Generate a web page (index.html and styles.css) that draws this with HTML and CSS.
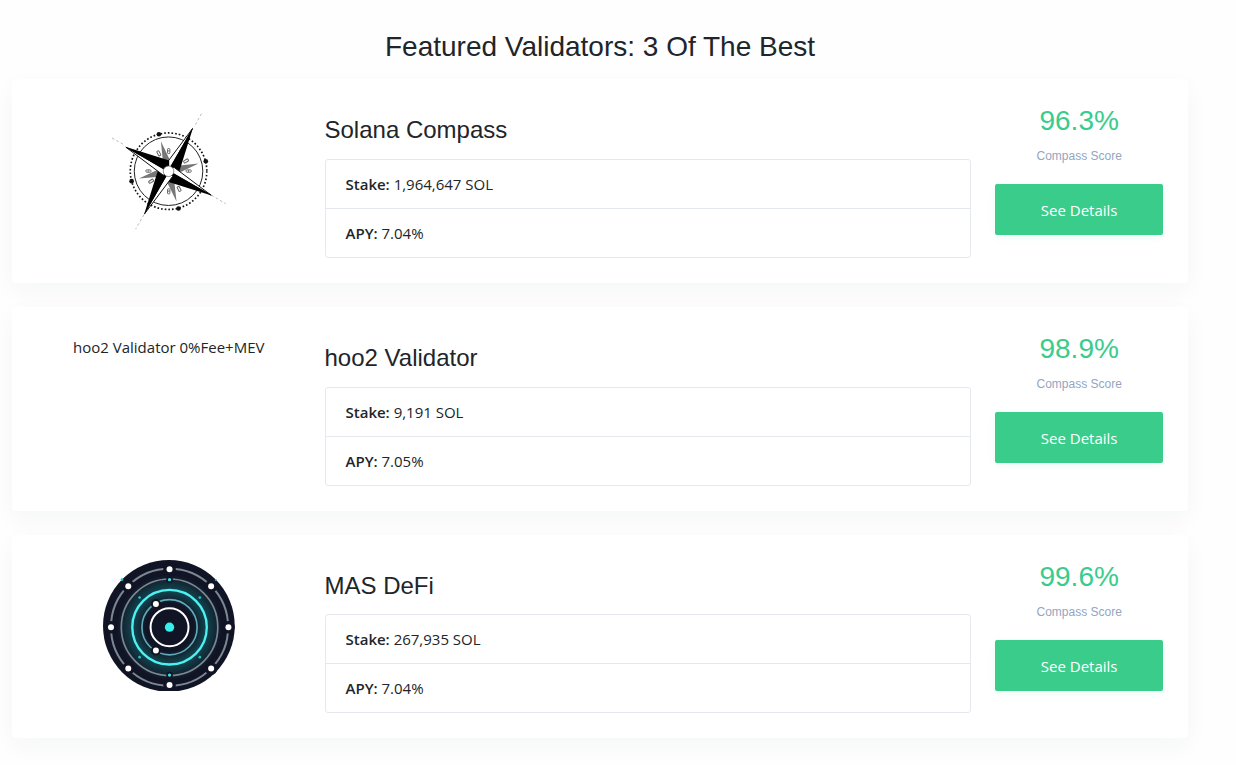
FILE: index.html
```html
<!DOCTYPE html>
<html lang="en">
<head>
  <meta charset="UTF-8" />
  <meta name="viewport" content="width=device-width, initial-scale=1.0"/>
  <title>Featured Validators</title>
  <link rel="stylesheet" href="styles.css">
</head>
<body>

  <main class="container">
    <h2 class="page-title">Featured Validators: 3 Of The Best</h2>

    <!-- Solana Compass -->
    <section class="card">
      <div class="logo">
        <svg class="logo-img" viewBox="9 -2 396 396" role="img" aria-label="Solana Compass">
          <defs>
            <g id="arm">
              <path d="M278 72L194 184L206 200Z" fill="#fff" stroke="#111" stroke-width="3"/>
              <path d="M280 68L238 202L206 202L213 183Z" fill="#000"/>
            </g>
          </defs>
          <g fill="none" stroke="#111">
            <path d="M36 100L75 122M305 27L283 67M335 272L378 298M132 331L107 374" stroke="#999" stroke-width="2" stroke-dasharray="8 7"/>
            <circle cx="206" cy="200" r="115" stroke-width="5" stroke-dasharray="5 6"/>
            <circle cx="206" cy="200" r="103" stroke="#222" stroke-width="3"/>
          </g>
          <g fill="#111">
            <circle cx="177" cy="89" r="7"/>
            <circle cx="318" cy="170" r="7"/>
            <circle cx="236" cy="312" r="7"/>
            <circle cx="95" cy="230" r="7"/>
          </g>
          <g fill="none" stroke="#666" stroke-width="3">
            <rect x="203" y="132" width="7" height="15" rx="2"/>
            <rect x="203" y="253" width="7" height="15" rx="2"/>
            <rect x="138" y="196" width="15" height="7" rx="2"/>
            <rect x="259" y="196" width="15" height="7" rx="2"/>
            <rect x="173" y="139" width="7" height="15" rx="2" transform="rotate(-28 176 146)"/>
            <rect x="234" y="246" width="7" height="15" rx="2" transform="rotate(-28 237 253)"/>
            <rect x="251" y="166" width="15" height="7" rx="2" transform="rotate(-32 258 169)"/>
            <rect x="146" y="227" width="15" height="7" rx="2" transform="rotate(-32 153 230)"/>
            <path d="M204 139h5M204 260h5M145 197v5M266 197v5"/>
          </g>
          <path d="M183 110L210 166L206 200L190 180ZM296 177L240 204L206 200L226 184ZM230 291L202 234L206 200L222 220ZM117 222L172 196L206 200L186 216Z" fill="#777"/>
          <use href="#arm"/>
          <use href="#arm" transform="rotate(90 206 200)"/>
          <use href="#arm" transform="rotate(180 206 200)"/>
          <use href="#arm" transform="rotate(270 206 200)"/>
          <circle cx="206" cy="200" r="16" fill="#fff" stroke="#555" stroke-width="2"/>
        </svg>
      </div>
      <div class="info">
        <h3>Solana Compass</h3>
        <ul class="stats">
          <li><strong>Stake:</strong> 1,964,647 SOL</li>
          <li><strong>APY:</strong> 7.04%</li>
        </ul>
      </div>
      <div class="score">
        <p class="score-value">96.3%</p>
        <p class="score-label">Compass Score</p>
        <a class="btn" href="#">See Details</a>
      </div>
    </section>

    <!-- hoo2 Validator -->
    <section class="card">
      <div class="logo">
        <p class="logo-text">hoo2 Validator 0%Fee+MEV</p>
      </div>
      <div class="info">
        <h3>hoo2 Validator</h3>
        <ul class="stats">
          <li><strong>Stake:</strong> 9,191 SOL</li>
          <li><strong>APY:</strong> 7.05%</li>
        </ul>
      </div>
      <div class="score">
        <p class="score-value">98.9%</p>
        <p class="score-label">Compass Score</p>
        <a class="btn" href="#">See Details</a>
      </div>
    </section>

    <!-- MAS DeFi -->
    <section class="card">
      <div class="logo">
        <svg class="logo-img" viewBox="15 15 396 396" role="img" aria-label="MAS DeFi">
          <defs>
            <radialGradient id="glow">
              <stop offset="0" stop-color="#111424"/>
              <stop offset="0.45" stop-color="#111424"/>
              <stop offset="0.7" stop-color="#12464f"/>
              <stop offset="1" stop-color="#111424"/>
            </radialGradient>
          </defs>
          <circle cx="213" cy="213" r="198" fill="#111424"/>
          <circle cx="215" cy="217" r="158" fill="url(#glow)"/>
          <g fill="none">
            <circle cx="215" cy="217" r="176" stroke="#7d8792" stroke-width="6"/>
            <circle cx="215" cy="217" r="145" stroke="#7d8792" stroke-width="5"/>
            <circle cx="215" cy="217" r="112" stroke="#4ff0f2" stroke-width="7"/>
            <circle cx="215" cy="217" r="83" stroke="#5fa9b9" stroke-width="5"/>
            <circle cx="215" cy="217" r="57" stroke="#fff" stroke-width="6"/>
          </g>
          <circle cx="215" cy="217" r="14" fill="#35eeee"/>
          <g fill="#fff" stroke="#111424" stroke-width="20" paint-order="stroke">
            <circle cx="215" cy="43" r="9"/>
            <circle cx="340" cy="94" r="9"/>
            <circle cx="392" cy="217" r="9"/>
            <circle cx="340" cy="341" r="9"/>
            <circle cx="215" cy="391" r="9"/>
            <circle cx="91" cy="341" r="9"/>
            <circle cx="39" cy="217" r="9"/>
            <circle cx="91" cy="94" r="9"/>
          </g>
          <g fill="#fff" stroke="#111424" stroke-width="12" paint-order="stroke">
            <circle cx="174" cy="147" r="9"/>
            <circle cx="174" cy="287" r="9"/>
          </g>
          <g fill="#35dfe0" stroke="#111424" stroke-width="10" paint-order="stroke">
            <circle cx="215" cy="74" r="5"/>
            <circle cx="215" cy="361" r="5"/>
          </g>
          <g fill="#20c4c8">
            <circle cx="125" cy="128" r="4"/>
            <circle cx="306" cy="128" r="4"/>
            <circle cx="125" cy="307" r="4"/>
            <circle cx="306" cy="307" r="4"/>
            <circle cx="72" cy="74" r="4"/>
            <circle cx="354" cy="75" r="3"/>
          </g>
        </svg>
      </div>
      <div class="info">
        <h3>MAS DeFi</h3>
        <ul class="stats">
          <li><strong>Stake:</strong> 267,935 SOL</li>
          <li><strong>APY:</strong> 7.04%</li>
        </ul>
      </div>
      <div class="score">
        <p class="score-value">99.6%</p>
        <p class="score-label">Compass Score</p>
        <a class="btn" href="#">See Details</a>
      </div>
    </section>
  </main>

</body>
</html>
```
FILE: styles.css
```css
* {
  box-sizing: border-box;
}

body {
  margin: 0;
  font-family: 'Segoe UI', 'Open Sans', sans-serif;
  font-size: 15px;
  line-height: 24px;
  color: #212529;
  background-color: #fefefe;
}

.container {
  padding: 30px 48px 0 12px;
}

h2, h3, p {
  margin: 0;
  font-weight: 400;
}

h2, h3, .score-value, .score-label {
  font-family: Arial, 'Liberation Sans', sans-serif;
}

.page-title {
  margin-bottom: 15px;
  font-size: 28px;
  line-height: 34px;
  text-align: center;
}

.card {
  display: grid;
  grid-template-columns: 3fr 7fr 2fr;
  margin-bottom: 24px;
  padding: 25px 13px;
  background: #fff;
  border-radius: 4px;
  box-shadow: 0 8px 24px rgba(31, 45, 61, 0.04);
}

.logo, .info, .score {
  padding: 0 12px;
}

.logo, .score {
  text-align: center;
}

.logo-img {
  display: block;
  width: 50%;
  margin: 0 auto;
}

.logo-text {
  padding-top: 3px;
}

.info h3 {
  padding-top: 12px;
  margin-bottom: 14px;
  font-size: 24px;
  line-height: 1.2;
}

.stats {
  margin: 0;
  padding: 0;
  list-style: none;
  border: 1px solid #e6e8f0;
  border-radius: 3px;
}

.stats li {
  padding: 12px 20px;
}

.stats li + li {
  border-top: 1px solid #e6e8f0;
}

.stats strong {
  font-weight: 600;
}

.score-value {
  margin-bottom: 9px;
  font-size: 28px;
  line-height: 34px;
  color: #3acc8b;
}

.score-label {
  margin-bottom: 19px;
  font-size: 12px;
  line-height: 18px;
  color: #95a5c0;
}

.btn {
  display: block;
  padding: 14px 12px 13px;
  background-color: #3acc8b;
  color: #fff;
  border-radius: 2px;
  text-decoration: none;
  box-shadow: 0 2px 8px rgba(58, 204, 139, 0.1);
}

.btn:hover {
  background-color: #2fb87a;
}
```
